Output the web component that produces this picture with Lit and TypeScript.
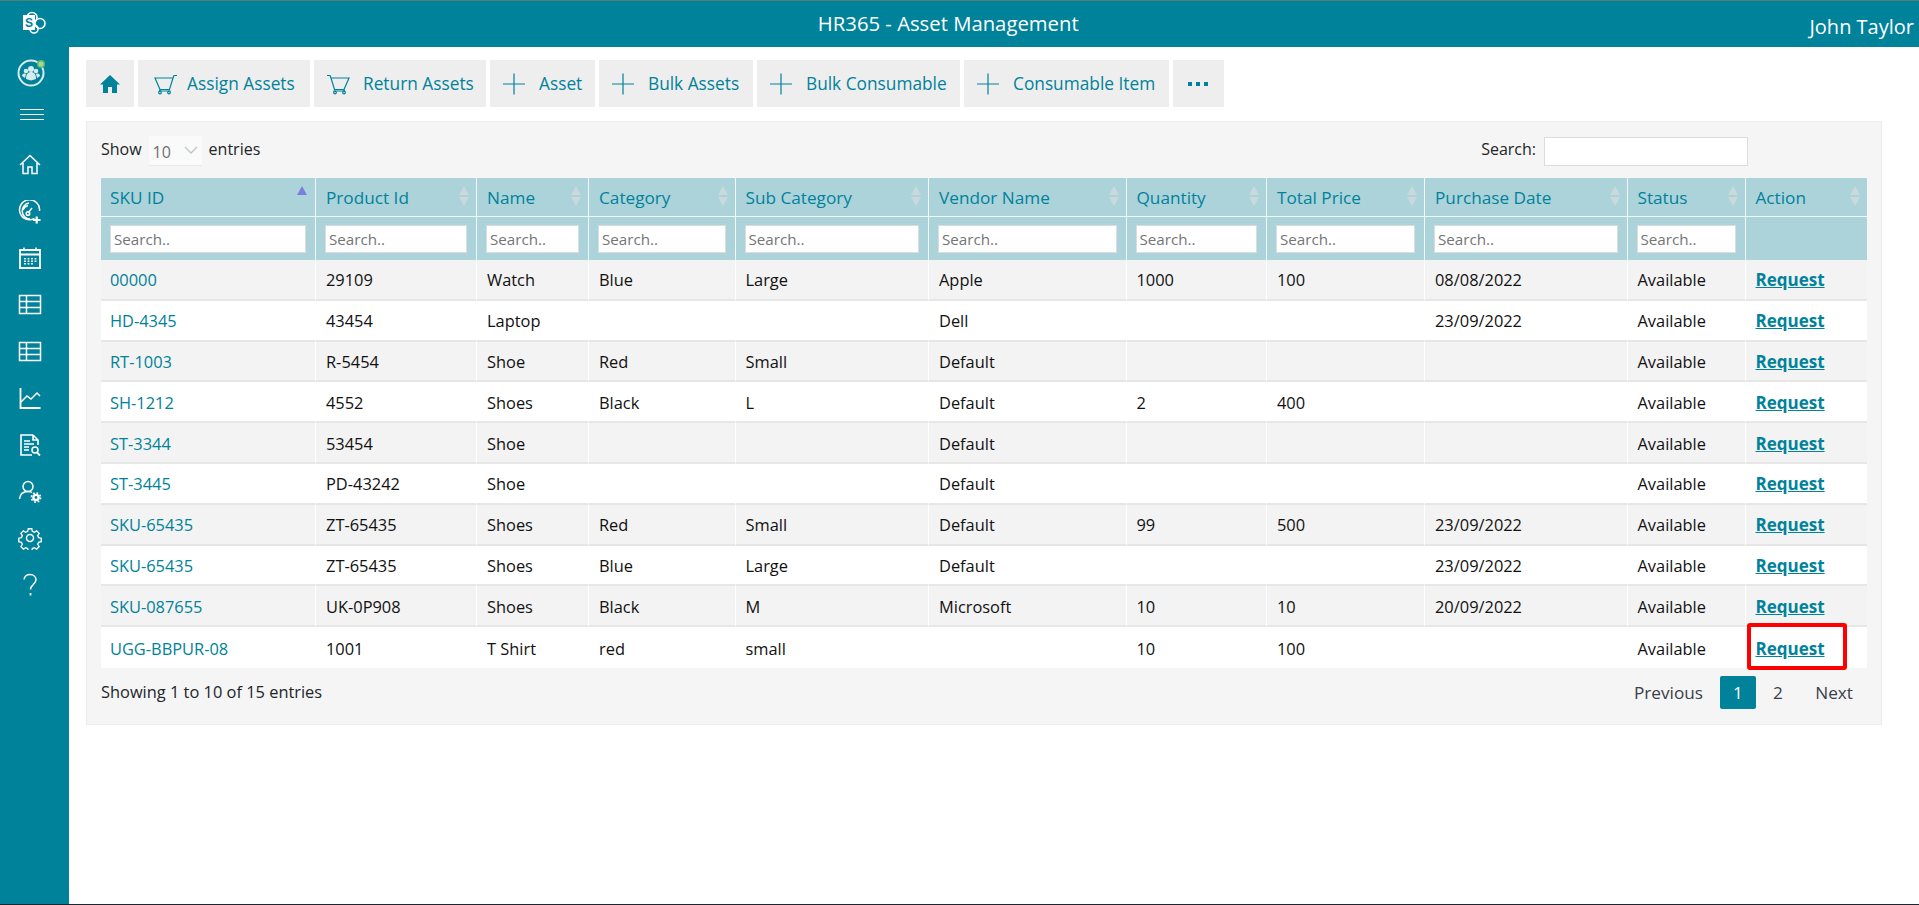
import { LitElement, html, css, svg } from 'lit';
import { customElement } from 'lit/decorators.js';

const COLUMNS = [
  { label: 'SKU ID', width: 215 },
  { label: 'Product Id', width: 161 },
  { label: 'Name', width: 112 },
  { label: 'Category', width: 146.5 },
  { label: 'Sub Category', width: 193.5 },
  { label: 'Vendor Name', width: 197.5 },
  { label: 'Quantity', width: 140.5 },
  { label: 'Total Price', width: 158 },
  { label: 'Purchase Date', width: 202.5 },
  { label: 'Status', width: 118 },
  { label: 'Action', width: 121.5 },
];

const ROWS = [
  ['00000', '29109', 'Watch', 'Blue', 'Large', 'Apple', '1000', '100', '08/08/2022'],
  ['HD-4345', '43454', 'Laptop', '', '', 'Dell', '', '', '23/09/2022'],
  ['RT-1003', 'R-5454', 'Shoe', 'Red', 'Small', 'Default', '', '', ''],
  ['SH-1212', '4552', 'Shoes', 'Black', 'L', 'Default', '2', '400', ''],
  ['ST-3344', '53454', 'Shoe', '', '', 'Default', '', '', ''],
  ['ST-3445', 'PD-43242', 'Shoe', '', '', 'Default', '', '', ''],
  ['SKU-65435', 'ZT-65435', 'Shoes', 'Red', 'Small', 'Default', '99', '500', '23/09/2022'],
  ['SKU-65435', 'ZT-65435', 'Shoes', 'Blue', 'Large', 'Default', '', '', '23/09/2022'],
  ['SKU-087655', 'UK-0P908', 'Shoes', 'Black', 'M', 'Microsoft', '10', '10', '20/09/2022'],
  ['UGG-BBPUR-08', '1001', 'T Shirt', 'red', 'small', '', '10', '100', ''],
];

const cartShape = svg`
  <path d="M0 3h18l-3.500 11.500H5zM18 3l1-2.500h3M5 14.500l-.5 1.500h11" />
  <circle cx="5" cy="17.500" r="1.300" />
  <circle cx="14" cy="17.500" r="1.300" />
`;
const cartOut = svg`<g transform="translate(4 4)">${cartShape}</g>`;
const cartBack = svg`<g transform="translate(22 4) scale(-1 1)">${cartShape}</g>`;
const plus = svg`<path d="M0 13h22M11 2.500v21" />`;

const TOOLS = [
  { label: 'Assign Assets', width: 172, icon: cartOut },
  { label: 'Return Assets', width: 172, icon: cartBack },
  { label: 'Asset', width: 105, icon: plus },
  { label: 'Bulk Assets', width: 154, icon: plus },
  { label: 'Bulk Consumable', width: 203, icon: plus },
  { label: 'Consumable Item', width: 205, icon: plus },
];

const table = svg`<path d="M1.500 2.500h21v18h-21zM1.500 8.500h21M1.500 14.500h21M8.500 2.500v18" />`;

const NAV = [
  svg`<path d="M2 12 12 2.500 22 12M5 10v10.500h5V14h4v6.500h5V10" />`,
  svg`<path d="M16.500 18.500A10 10 0 1 1 21.500 11M12 19a8 8 0 0 1-1-15.900M5 10a7 7 0 0 1 5-4.500" /><path d="M10 13l4-5" /><circle cx="10" cy="13.500" r="1.800" /><path d="M15 20h7.500M18.700 16.500v7" stroke-width="2.200" />`,
  svg`<path d="M2 4h20v18H2zM2 8.500h20" stroke-width="1.800" /><path d="M6 1.500V5M18 1.500V5" /><path d="M7 12v7.500M10.500 12v7.500M14 12v7.500M17.500 12v5" stroke-width="1.800" stroke-dasharray="1.500 1" />`,
  table,
  table,
  svg`<path d="M2.500 2v20h20" stroke-width="1.800" /><path d="M3 16l6-6 4 3 6-6 3 3" />`,
  svg`<path d="M15 2H3v20h11M15 2l5 5v5M15 2v5h5" stroke-width="1.600" /><path d="M6 8h6M6 11h10M6 14h5M6 17h5" stroke-width="1.600" /><circle cx="17" cy="17" r="3" /><path d="M19 19.500l3 3" stroke-width="1.800" />`,
  svg`<circle cx="10" cy="7.500" r="5" /><path d="M1.500 20c.5-5 4-7.500 8.500-7.500 1.500 0 3 .3 4 1" /><circle cx="18" cy="18.500" r="2.600" stroke-width="2.400" /><circle cx="18" cy="18.500" r="4.600" stroke-width="1.600" stroke-dasharray="1.800 1.800" />`,
  svg`<circle cx="12" cy="12" r="3.500" /><path d="M10 1.500h4l.6 3 2.300 1 2.600-1.600 2.800 2.800-1.600 2.600 1 2.300 3 .6v4l-3 .6-1 2.300 1.600 2.600-2.800 2.800-2.600-1.600-2.300 1-.6 3h-4l-.6-3-2.300-1-2.600 1.600-2.800-2.800 1.600-2.600-1-2.300-3-.6v-4l3-.6 1-2.300-1.600-2.600 2.800-2.800 2.600 1.600 2.300-1z" transform="translate(1.400 1.400) scale(.885)" />`,
  svg`<path d="M6 6.500C6.500 3.500 9 1.500 12 1.500c3.500 0 6 2.300 6 5.300 0 2.500-1.500 3.700-3 5-1.500 1.200-2.500 2.500-2.500 4.700" /><path d="M12.500 20v2.500" stroke-width="1.800" />`,
];

@customElement('app-root')
export class AppRoot extends LitElement {
  static styles = css`
    :host {
      display: block;
      height: 905px;
      font-family: 'Open Sans', 'Noto Sans', sans-serif;
      font-size: 16.4px;
      color: #212529;
      overflow: hidden;
    }

    .shell {
      display: flex;
      height: 905px;
      box-sizing: border-box;
      border-top: 1px solid #4f8270;
      border-bottom: 1px solid #1d2530;
      background: #fff;
    }

    /* sidebar */
    .side {
      width: 69px;
      flex: none;
      background: #00829b;
      display: flex;
      flex-direction: column;
      padding-left: 18px;
      box-sizing: border-box;
    }

    .logo {
      display: block;
      margin: 10px 0 0 4px;
      width: 24px;
      height: 24px;
    }

    .team {
      display: block;
      margin: 21px 0 0 -2px;
      width: 32px;
      height: 32px;
    }

    .burger {
      display: flex;
      flex-direction: column;
      gap: 4px;
      width: 24px;
      margin: 21px 0 0 2px;
    }

    .burger span {
      height: 1px;
      background: #fff;
    }

    .nav {
      display: flex;
      flex-direction: column;
      margin-top: 22px;
    }

    .nav div {
      height: 46.6px;
      display: flex;
      align-items: center;
    }

    .nav svg {
      width: 24px;
      height: 24px;
      fill: none;
      stroke: #fff;
      stroke-width: 1.5;
    }

    /* main column */
    .main {
      flex: 1;
      min-width: 0;
    }

    .top {
      height: 46px;
      background: #00829b;
      color: #fff;
      display: flex;
      align-items: center;
    }

    .title {
      flex: 1;
      text-align: center;
      font-size: 20.3px;
      padding-left: 18px;
      margin-top: -2px;
    }

    .user {
      font-size: 20px;
      padding-right: 5px;
      margin-top: 5px;
    }

    .content {
      padding: 13px 37px 0 17px;
    }

    /* toolbar */
    .tools {
      display: flex;
      gap: 4px;
    }

    .tool {
      height: 47px;
      background: #eee;
      color: #00829b;
      font-size: 17.3px;
      display: flex;
      align-items: center;
      padding-left: 13px;
      gap: 10px;
      box-sizing: border-box;
      white-space: nowrap;
    }

    .tool svg {
      width: 26px;
      height: 26px;
      flex: none;
      fill: none;
      stroke: #00829b;
      stroke-width: 1.2;
    }

    .tool.home {
      width: 48px;
      padding-left: 14px;
    }

    .tool.home svg {
      width: 20px;
      height: 20px;
      fill: #00829b;
      stroke: none;
    }

    .tool.more {
      width: 51px;
      padding-left: 15px;
    }

    .dots {
      display: flex;
      gap: 4px;
    }

    .dots span {
      width: 4px;
      height: 4px;
      background: #00829b;
    }

    /* panel */
    .panel {
      margin-top: 14px;
      height: 604px;
      box-sizing: border-box;
      background: #f5f5f5;
      border: 1px solid #eceded;
      padding: 14px 14px 0 14px;
    }

    .filters {
      display: flex;
      align-items: center;
      height: 30px;
      margin-bottom: 12px;
      font-size: 16px;
    }

    .lbl {
      margin-top: -5px;
    }

    .select {
      width: 53px;
      height: 30px;
      margin: 0 7px;
      background: #fafafa;
      border-bottom: 1px solid #e8e8e8;
      box-sizing: border-box;
      color: #6f6f6f;
      display: flex;
      align-items: center;
      justify-content: space-between;
      padding: 3px 4px 0 4px;
    }

    .select svg {
      width: 14px;
      height: 8px;
      fill: none;
      stroke: #bcc6c8;
      stroke-width: 1.3;
      margin-top: -4px;
    }

    .search-label {
      margin-left: auto;
      margin-right: 8px;
    }

    .search-box {
      width: 204px;
      height: 29px;
      box-sizing: border-box;
      background: #fff;
      border: 1px solid #dcdcdc;
      margin-right: 119px;
    }

    table {
      border-collapse: separate;
      border-spacing: 0;
      table-layout: fixed;
      width: 1766px;
    }

    th {
      background: #acd3da;
      font-weight: 400;
      color: #00829b;
      text-align: left;
      padding: 0 7px 0 10px;
      border-right: 1px solid #f0f7f8;
      box-sizing: border-box;
    }

    th:first-child {
      padding-left: 9px;
      padding-right: 8px;
    }

    th:last-child,
    td:last-child {
      border-right: none;
    }

    .heads th {
      height: 39px;
      border-bottom: 1px solid #f0f7f8;
      font-size: 17.2px;
    }

    .th-in {
      display: flex;
      align-items: center;
      justify-content: space-between;
    }

    .sort {
      display: flex;
      flex-direction: column;
      gap: 2px;
      margin-top: -2px;
    }

    .sort i {
      display: block;
      width: 0;
      height: 0;
      border-left: 5.5px solid transparent;
      border-right: 5.5px solid transparent;
    }

    .sort .up {
      border-bottom: 9px solid #c9d9dc;
    }

    .sort .down {
      border-top: 9px solid #c9d9dc;
    }

    .sort.active .up {
      border-bottom-color: #7b7fdc;
    }

    .sort.active .down {
      border-top-color: transparent;
    }

    .finds th {
      height: 43px;
      padding: 0 9px;
    }

    .find {
      height: 28px;
      box-sizing: border-box;
      background: #fff;
      border: 1px solid #d9dddd;
      color: #757575;
      font-size: 15.2px;
      line-height: 27px;
      padding-left: 3px;
      overflow: hidden;
    }

    td {
      height: 40.8px;
      box-sizing: border-box;
      padding: 1px 9px 0 10px;
      border-right: 1px solid #fff;
      border-bottom: 2px solid #e6e6e6;
      white-space: nowrap;
      color: #111;
    }

    tbody tr:nth-child(odd) td {
      background: #f3f3f3;
    }

    tbody tr:nth-child(even) td {
      background: #fff;
    }

    tbody tr:last-child td {
      border-bottom: none;
    }

    td.sku {
      color: #00829b;
      padding-left: 9px;
    }

    .req {
      color: #00829b;
      font-weight: 700;
      font-size: 17px;
      text-decoration: underline;
    }

    .action {
      position: relative;
    }

    .mark {
      position: absolute;
      left: 1px;
      top: -4px;
      width: 100px;
      height: 47px;
      box-sizing: border-box;
      border: 4px solid #ff0000;
      border-radius: 3px;
    }

    /* footer */
    .foot {
      display: flex;
      align-items: center;
      justify-content: space-between;
      margin-top: 8px;
      height: 33px;
    }

    .count {
      margin-top: -2px;
    }

    .pages {
      display: flex;
      align-items: center;
      margin-right: 14px;
      color: #3a4049;
      font-size: 17.2px;
    }

    .pages .cur {
      width: 36px;
      height: 33px;
      margin: 0 17px;
      background: #00829b;
      color: #fff;
      border-radius: 2px;
      display: flex;
      align-items: center;
      justify-content: center;
    }

    .pages .next {
      margin-left: 32.5px;
    }
  `;

  renderHeadCell (label: string, i: number) {
    return html`
      <th>
        <div class="th-in">
          <span>${label}</span>
          <span class="sort ${i === 0 ? 'active' : ''}"><i class="up"></i><i class="down"></i></span>
        </div>
      </th>
    `;
  }

  renderRow (row: string[], i: number) {
    return html`
      <tr>
        ${row.map((cell, c) => html`<td class=${c === 0 ? 'sku' : ''}>${cell}</td>`)}
        <td>Available</td>
        <td class="action">
          <span class="req">Request</span>
          ${i === ROWS.length - 1 ? html`<div class="mark"></div>` : ''}
        </td>
      </tr>
    `;
  }

  render () {
    return html`
      <div class="shell">
        <aside class="side">
          <svg class="logo" viewBox="0 0 24 24">
            <g fill="none" stroke="#fff" stroke-width="1.6">
              <circle cx="10" cy="6.5" r="5" />
              <circle cx="18" cy="12.5" r="5" />
              <circle cx="12" cy="18" r="4" />
            </g>
            <rect x="1" y="4" width="12" height="15" fill="#fff" />
            <text x="7" y="16" text-anchor="middle" font-family="Liberation Sans" font-weight="700" font-size="12" fill="#00829b">S</text>
          </svg>
          <svg class="team" viewBox="0 0 32 32">
            <circle cx="15" cy="17" r="12.5" fill="none" stroke="#d8ecec" stroke-width="2" />
            <g fill="#d8ecec">
              <circle cx="15" cy="13" r="3" />
              <circle cx="10" cy="15" r="2.3" />
              <circle cx="20" cy="15" r="2.3" />
              <path d="M10 23c0-5 2-7 5-7s5 2 5 7l-5 1.5z" />
              <path d="M6 20c0-2 2-3 4-2l-1 4zM24 20c0-2-2-3-4-2l1 4z" />
            </g>
            <circle cx="25" cy="8" r="3.3" fill="#a5d6a0" stroke="#5fb868" stroke-width="1.5" />
          </svg>
          <div class="burger"><span></span><span></span><span></span></div>
          <div class="nav">
            ${NAV.map(icon => html`<div><svg viewBox="0 0 24 24">${icon}</svg></div>`)}
          </div>
        </aside>

        <div class="main">
          <header class="top">
            <div class="title">HR365 - Asset Management</div>
            <div class="user">John Taylor</div>
          </header>

          <div class="content">
            <div class="tools">
              <div class="tool home">
                <svg viewBox="0 0 20 20"><path d="M10 1 0 10.5h3V19h5v-6h4v6h5v-8.5h3z" /></svg>
              </div>
              ${TOOLS.map(t => html`
                <div class="tool" style="width:${t.width}px">
                  <svg viewBox="0 0 26 26">${t.icon}</svg>
                  <span>${t.label}</span>
                </div>
              `)}
              <div class="tool more"><div class="dots"><span></span><span></span><span></span></div></div>
            </div>

            <section class="panel">
              <div class="filters">
                <span class="lbl">Show</span>
                <div class="select">
                  <span>10</span>
                  <svg viewBox="0 0 14 8"><path d="M1 1l6 6 6-6" /></svg>
                </div>
                <span class="lbl">entries</span>
                <span class="lbl search-label">Search:</span>
                <div class="search-box"></div>
              </div>

              <table>
                <colgroup>
                  ${COLUMNS.map(c => html`<col style="width:${c.width}px" />`)}
                </colgroup>
                <thead>
                  <tr class="heads">${COLUMNS.map((c, i) => this.renderHeadCell(c.label, i))}</tr>
                  <tr class="finds">
                    ${COLUMNS.map((c, i) => html`<th>${i < COLUMNS.length - 1 ? html`<div class="find">Search..</div>` : ''}</th>`)}
                  </tr>
                </thead>
                <tbody>
                  ${ROWS.map((r, i) => this.renderRow(r, i))}
                </tbody>
              </table>

              <div class="foot">
                <span class="count">Showing 1 to 10 of 15 entries</span>
                <div class="pages">
                  <span>Previous</span>
                  <span class="cur">1</span>
                  <span>2</span>
                  <span class="next">Next</span>
                </div>
              </div>
            </section>
          </div>
        </div>
      </div>
    `;
  }
}
